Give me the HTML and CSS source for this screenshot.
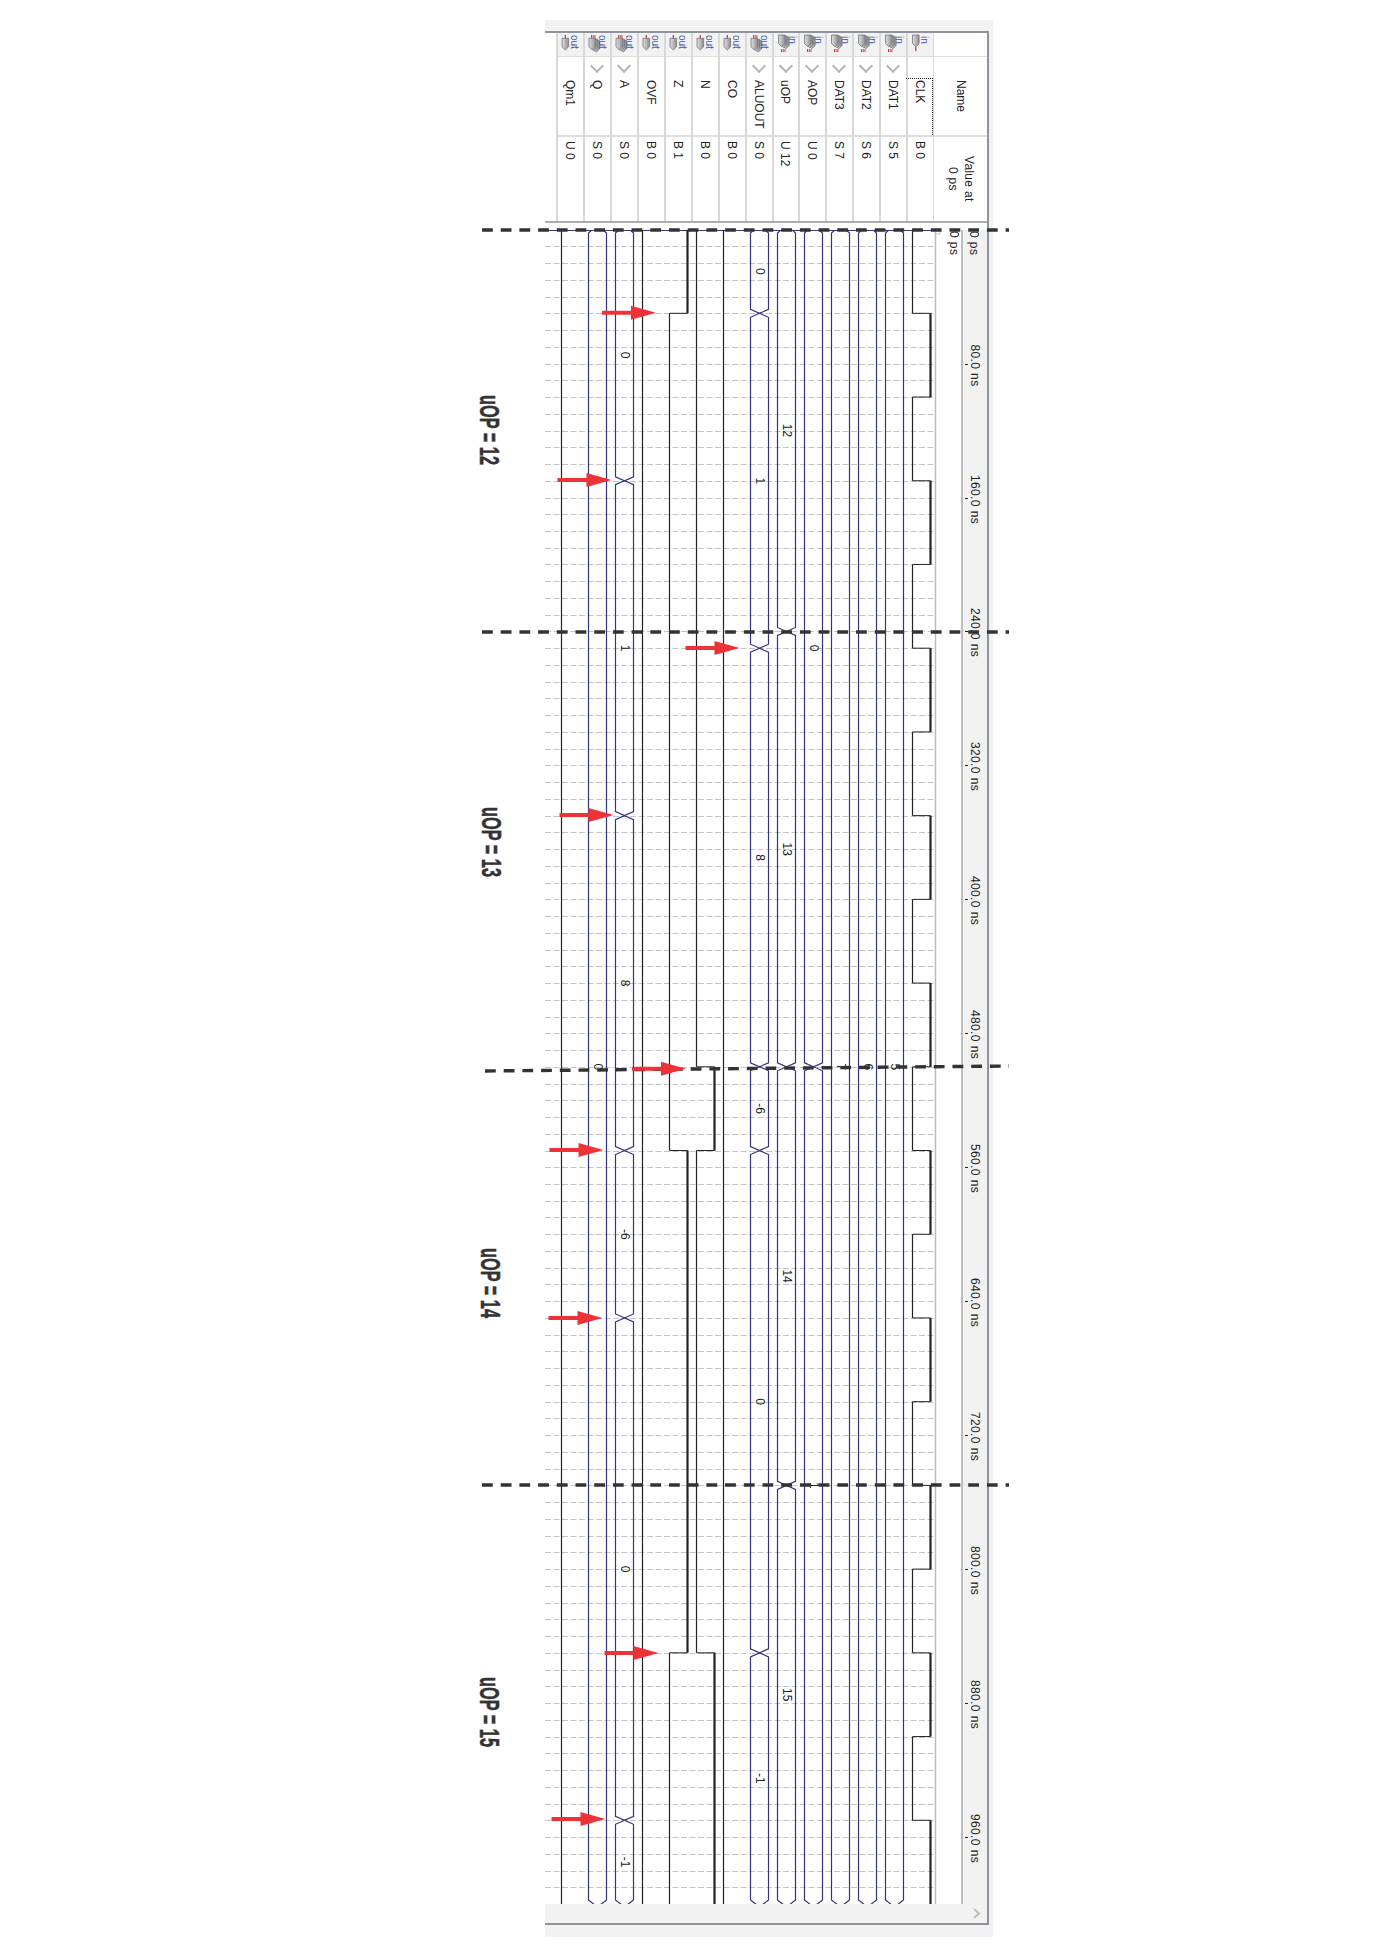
FILE: index.html
```html
<!DOCTYPE html>
<html lang="en">
  <head>
    <meta charset="UTF-8" />
    <title>Simulation waveform</title>
    <link rel="stylesheet" href="styles.css">
  </head>
  <body>
    <svg class="defs" width="0" height="0">
      <defs>
        <linearGradient id="pin-fill" x1="0" x2="1" y1="0" y2="0">
          <stop offset="0" stop-color="#e2e2e2" />
          <stop offset="1" stop-color="#8d8d8d" />
        </linearGradient>
        <path id="pin" d="M0 0H6.6V8.5L3.3 11.7L0 8.5Z" fill="url(#pin-fill)" stroke="#70757c" stroke-width=".8" />
        <symbol id="pin-out" viewBox="0 0 27 23">
          <path d="M9.3 2V5.3" stroke="#e0202a" stroke-width="1.2" />
          <use href="#pin" x="6" y="5.3" />
          <text class="pin-text" transform="translate(14.5 2) rotate(90)">out</text>
        </symbol>
        <symbol id="pin-out-bus" viewBox="0 0 27 23">
          <path d="M8.5 2V5M10.2 2V5M11.9 2V5" stroke="#e0202a" stroke-width=".9" />
          <use href="#pin" x="10" y="7.3" />
          <use href="#pin" x="8" y="6.3" />
          <use href="#pin" x="6" y="5.3" />
          <text class="pin-text" transform="translate(16 2) rotate(90)">out</text>
        </symbol>
        <symbol id="pin-in" viewBox="0 0 27 23">
          <use href="#pin" x="6.5" y="2" />
          <path d="M9.8 13.7V18" stroke="#e0202a" stroke-width="1.2" />
          <text class="pin-text" transform="translate(15 3) rotate(90)">in</text>
        </symbol>
        <symbol id="pin-in-bus" viewBox="0 0 27 23">
          <use href="#pin" x="10.5" y="4" />
          <use href="#pin" x="8.5" y="3" />
          <use href="#pin" x="6.5" y="2" />
          <path d="M9.5 16V19M11.2 16V19M12.9 16V19" stroke="#e0202a" stroke-width=".9" />
          <text class="pin-text" transform="translate(17 3) rotate(90)">in</text>
        </symbol>
        <polygon id="arrow" points="0,-2 29,-2 29,-7 54,0 29,7 29,2 0,2" fill="#ee3338" />
      </defs>
    </svg>

    <div class="window">
      <div class="panel">
        <div class="table">
          <div class="col">
            <div class="cell-icon"><svg class="icon"><use href="#pin-out" /></svg></div>
            <div class="cell-name">Qm1</div>
            <div class="cell-value">U 0</div>
          </div>
          <div class="col">
            <div class="cell-icon"><svg class="icon"><use href="#pin-out-bus" /></svg></div>
            <div class="cell-name has-chevron">Q</div>
            <div class="cell-value">S 0</div>
          </div>
          <div class="col">
            <div class="cell-icon"><svg class="icon"><use href="#pin-out-bus" /></svg></div>
            <div class="cell-name has-chevron">A</div>
            <div class="cell-value">S 0</div>
          </div>
          <div class="col">
            <div class="cell-icon"><svg class="icon"><use href="#pin-out" /></svg></div>
            <div class="cell-name">OVF</div>
            <div class="cell-value">B 0</div>
          </div>
          <div class="col">
            <div class="cell-icon"><svg class="icon"><use href="#pin-out" /></svg></div>
            <div class="cell-name">Z</div>
            <div class="cell-value">B 1</div>
          </div>
          <div class="col">
            <div class="cell-icon"><svg class="icon"><use href="#pin-out" /></svg></div>
            <div class="cell-name">N</div>
            <div class="cell-value">B 0</div>
          </div>
          <div class="col">
            <div class="cell-icon"><svg class="icon"><use href="#pin-out" /></svg></div>
            <div class="cell-name">CO</div>
            <div class="cell-value">B 0</div>
          </div>
          <div class="col">
            <div class="cell-icon"><svg class="icon"><use href="#pin-out-bus" /></svg></div>
            <div class="cell-name has-chevron">ALUOUT</div>
            <div class="cell-value">S 0</div>
          </div>
          <div class="col">
            <div class="cell-icon"><svg class="icon"><use href="#pin-in-bus" /></svg></div>
            <div class="cell-name has-chevron">uOP</div>
            <div class="cell-value">U 12</div>
          </div>
          <div class="col">
            <div class="cell-icon"><svg class="icon"><use href="#pin-in-bus" /></svg></div>
            <div class="cell-name has-chevron">AOP</div>
            <div class="cell-value">U 0</div>
          </div>
          <div class="col">
            <div class="cell-icon"><svg class="icon"><use href="#pin-in-bus" /></svg></div>
            <div class="cell-name has-chevron">DAT3</div>
            <div class="cell-value">S 7</div>
          </div>
          <div class="col">
            <div class="cell-icon"><svg class="icon"><use href="#pin-in-bus" /></svg></div>
            <div class="cell-name has-chevron">DAT2</div>
            <div class="cell-value">S 6</div>
          </div>
          <div class="col">
            <div class="cell-icon"><svg class="icon"><use href="#pin-in-bus" /></svg></div>
            <div class="cell-name has-chevron">DAT1</div>
            <div class="cell-value">S 5</div>
          </div>
          <div class="col">
            <div class="cell-icon"><svg class="icon"><use href="#pin-in" /></svg></div>
            <div class="cell-name is-focused">CLK</div>
            <div class="cell-value">B 0</div>
          </div>
          <div class="col col-head">
            <div class="cell-icon"></div>
            <div class="cell-name">Name</div>
            <div class="cell-value">Value at<br />0 ps</div>
          </div>
        </div>
        <svg id="wave" class="wave" viewBox="545 230 442 1674"></svg>
        <div class="scrollbar">
          <svg class="scroll-arrow" viewBox="0 0 8 11"><path d="M1 1L6 5.5L1 10" /></svg>
        </div>
      </div>
    </div>

    <!-- hand annotations drawn on top of the screenshot -->
    <svg class="notes" width="1381" height="1953" viewBox="0 0 1381 1953">
      <g class="cuts">
        <line x1="482" y1="230" x2="1009" y2="230" />
        <line x1="482" y1="632" x2="1009" y2="632" />
        <line x1="485" y1="1071" x2="1009" y2="1066" />
        <line x1="482" y1="1485" x2="1009" y2="1485" />
      </g>
      <use href="#arrow" x="602" y="312.7" />
      <use href="#arrow" x="557.5" y="480" />
      <use href="#arrow" x="685.5" y="648" />
      <use href="#arrow" x="559.5" y="815" />
      <use href="#arrow" x="632" y="1068.7" />
      <use href="#arrow" x="549.5" y="1150" />
      <use href="#arrow" x="548.5" y="1318" />
      <use href="#arrow" x="604.5" y="1653" />
      <use href="#arrow" x="551.5" y="1819" />
      <text class="note" transform="translate(480 395) rotate(90)" textLength="70" lengthAdjust="spacingAndGlyphs">uOP = 12</text>
      <text class="note" transform="translate(482 807) rotate(90)" textLength="70" lengthAdjust="spacingAndGlyphs">uOP = 13</text>
      <text class="note" transform="translate(481 1248) rotate(90)" textLength="70" lengthAdjust="spacingAndGlyphs">uOP = 14</text>
      <text class="note" transform="translate(480 1677) rotate(90)" textLength="70" lengthAdjust="spacingAndGlyphs">uOP = 15</text>
    </svg>

    <script src="wave.js"></script>
  </body>
</html>
```

FILE: styles.css
```css
* {
  box-sizing: border-box;
}

body {
  margin: 0;
  padding: 20px 0 16px 545px;
  background: #fff;
  position: relative;
  font-family: "Liberation Sans", Arial, sans-serif;
  font-size: 12px;
  color: #222;
}

.defs {
  position: absolute;
}

.window {
  width: 448px;
  height: 1917px;
  padding: 11px 4px 12px 0;
  background: #f2f2f2;
}

.panel {
  display: flex;
  flex-direction: column;
  height: 100%;
  background: #fff;
  border: 2px solid #8f949c;
  border-left: 0;
}

.table {
  display: flex;
  height: 190px;
  padding-left: 11px;
  border-bottom: 2px solid #a9acb1;
}

.col {
  display: grid;
  grid-template-columns: minmax(0, 1fr);
  grid-template-rows: 24px 80px 1fr;
  width: 27px;
  border-left: 2px solid #d8d8d8;
}

.col-head {
  width: 54px;
  border-left-width: 1px;
}

.cell-icon {
  background: #f2f2f2;
  border-bottom: 1px solid #dedede;
}

.col-head .cell-icon {
  background: #fff;
}

.icon {
  display: block;
  width: 27px;
  height: 23px;
  margin-left: -2px;
}

.pin-text {
  font-size: 10px;
  fill: #3f5cae;
}

.cell-name,
.cell-value {
  writing-mode: vertical-rl;
  line-height: 26px;
  white-space: nowrap;
}

.cell-name {
  position: relative;
  padding-top: 23px;
  border-bottom: 2px solid #dedede;
}

.has-chevron::before {
  content: "";
  position: absolute;
  top: 4px;
  left: 7px;
  width: 8px;
  height: 8px;
  border-right: 2px solid #b4b4b4;
  border-bottom: 2px solid #b4b4b4;
  transform: rotate(45deg);
}

.is-focused::after {
  content: "";
  position: absolute;
  top: 21px;
  left: -2px;
  right: 0;
  bottom: 0;
  border-top: 1px dotted #222;
  border-right: 1px dotted #222;
}

.cell-value {
  padding-top: 4px;
}

.col-head .cell-name {
  line-height: 52px;
}

.col-head .cell-value {
  padding-top: 0;
  line-height: 16px;
  text-align: center;
  justify-self: center;
  letter-spacing: .3px;
}

.wave {
  display: block;
  width: 442px;
  height: 1674px;
  margin-top: 7px;
  font-size: 12px;
}

.grid-line {
  stroke: #c4c4c4;
  stroke-dasharray: 6 2.5;
}

.bit-line {
  fill: none;
  stroke: #222;
}

.bus-line {
  fill: none;
  stroke: #34347e;
  stroke-width: 1.2;
}

.bus-label,
.time-label {
  fill: #222;
}

.time-label {
  letter-spacing: .4px;
}

.scrollbar {
  display: flex;
  flex: 1;
  justify-content: flex-end;
  align-items: center;
  padding-right: 6px;
  background: #f2f2f2;
}

.scroll-arrow {
  width: 8px;
  height: 11px;
}

.scroll-arrow path {
  fill: none;
  stroke: #bdbdbd;
  stroke-width: 2;
}

.notes {
  position: absolute;
  top: 0;
  left: 0;
  pointer-events: none;
}

.cuts line {
  stroke: #333;
  stroke-width: 3.4;
  stroke-dasharray: 10.8 7.9;
}

.note {
  font-size: 28px;
  font-weight: bold;
  fill: #333;
  stroke: #333;
  stroke-width: .5;
}
```

FILE: wave.js
```js
const PX_PER_NS = 1.6744;
const WAVE_TOP = 229.6;
const WAVE_BOTTOM = 1904;
const END_NS = 1010;

function y(ns) {
  return WAVE_TOP + ns * PX_PER_NS;
}

// row index -> left x of that signal's trace
function rowX(row) {
  return 561.5 + 27 * row;
}

const bits = [
  { row: 0, start: 0, edges: [] },
  { row: 3, start: 0, edges: [] },
  { row: 4, start: 1, edges: [50, 550, 850] },
  { row: 5, start: 0, edges: [500, 550, 850] },
  { row: 6, start: 0, edges: [] },
];

const clkEdges = [];
for (let t = 50; t < 1000; t += 50) clkEdges.push(t);
bits.push({ row: 13, start: 0, edges: clkEdges });

const buses = [
  { row: 1, parts: [['0', 0, 1000]] },
  { row: 2, parts: [['0', 0, 150], ['1', 150, 350], ['8', 350, 550], ['-6', 550, 650], ['0', 650, 950], ['-1', 950, 1000]] },
  { row: 7, parts: [['0', 0, 50], ['1', 50, 250], ['8', 250, 500], ['-6', 500, 550], ['0', 550, 850], ['-1', 850, 1000]] },
  { row: 8, parts: [['12', 0, 240], ['13', 240, 500], ['14', 500, 750], ['15', 750, 1000]] },
  { row: 9, parts: [['0', 0, 500], ['1', 500, 1000]] },
  { row: 10, parts: [['7', 0, 1000]] },
  { row: 11, parts: [['6', 0, 1000]] },
  { row: 12, parts: [['5', 0, 1000]] },
];

function gridLines() {
  let out = '';
  for (let n = 1; y(n * 10) < WAVE_BOTTOM; n++) {
    const gy = Math.round(y(n * 10)) + 0.5;
    out += `<line class="grid-line" x1="545" x2="935" y1="${gy}" y2="${gy}" />`;
  }
  return out;
}

function bitTrace({ row, start, edges }) {
  const low = rowX(row);
  const high = low + 18;
  const times = [0, ...edges, END_NS];
  let out = '';
  let level = start;
  for (let i = 0; i < times.length - 1; i++) {
    const x = level ? high : low;
    const y1 = y(times[i]);
    const y2 = y(times[i + 1]);
    out += `<line class="bit-line" x1="${x}" x2="${x}" y1="${y1}" y2="${y2}" stroke-width="${level ? 2.2 : 1.2}" />`;
    if (i < times.length - 2) {
      out += `<line class="bit-line" x1="${low}" x2="${high}" y1="${y2}" y2="${y2}" />`;
    }
    level = 1 - level;
  }
  return out;
}

function busTrace({ row, parts }) {
  const left = rowX(row);
  const right = left + 18;
  const mid = left + 9;
  let out = '';
  for (const [label, from, to] of parts) {
    // first and last segments run out of the visible range
    const y1 = from === 0 ? 225 : y(from);
    const y2 = to === 1000 ? 1907 : y(to);
    const in1 = from === 0 ? 233 : y1 + 4;
    const in2 = to === 1000 ? 1900 : y2 - 4;
    out += `<path class="bus-line" d="M${mid} ${y1}L${left} ${in1}V${in2}L${mid} ${y2}L${right} ${in2}V${in1}Z" />`;
    const labelY = (y(from) + Math.min(y(to), WAVE_BOTTOM)) / 2;
    out += `<text class="bus-label" text-anchor="middle" transform="translate(${mid - 4} ${labelY}) rotate(90)">${label}</text>`;
  }
  return out;
}

function timeBar() {
  let out = '<rect x="962" y="230" width="26" height="1674" fill="#f2f2f2" />';
  out += '<line x1="935.5" x2="935.5" y1="230" y2="1904" stroke="#bbb" stroke-width="1.5" />';
  out += '<line x1="962" x2="962" y1="230" y2="1904" stroke="#aaa" stroke-width="1.5" />';
  out += '<path d="M936 234H940V230" fill="none" stroke="#c8c8c8" />';
  out += '<text class="time-label" transform="translate(950 231) rotate(90)">0 ps</text>';
  out += '<text class="time-label" transform="translate(970 231) rotate(90)">0 ps</text>';
  for (let t = 80; t <= 960; t += 80) {
    const ty = Math.round(y(t)) + 0.5;
    out += `<line x1="965" x2="968" y1="${ty}" y2="${ty}" stroke="#222" />`;
    out += `<text class="time-label" text-anchor="middle" transform="translate(971 ${ty + 1}) rotate(90)">${t}.0 ns</text>`;
  }
  return out;
}

document.getElementById('wave').innerHTML =
  gridLines() +
  '<line x1="545" x2="935" y1="230.5" y2="230.5" stroke="#34347e" />' +
  bits.map(bitTrace).join('') +
  buses.map(busTrace).join('') +
  timeBar();
```
